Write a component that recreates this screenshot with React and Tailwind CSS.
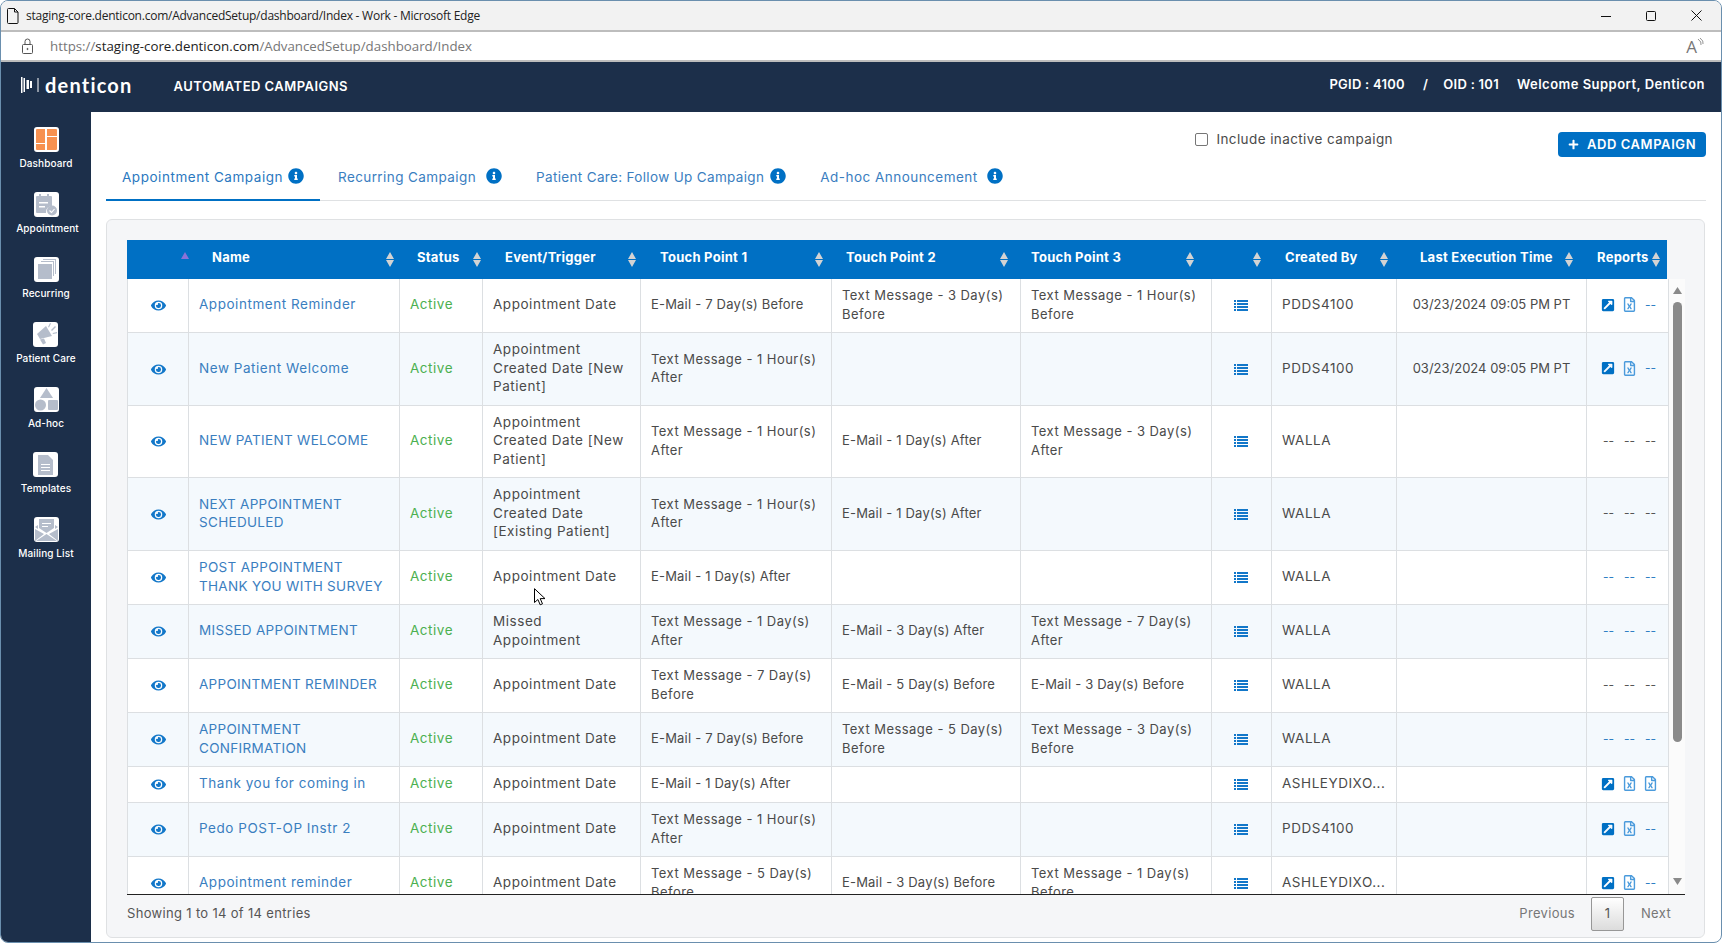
import React from "react";
import { FaEye, FaInfoCircle, FaPlus, FaExternalLinkSquareAlt, FaRegFileExcel } from "react-icons/fa";

const TM1HA = "Text Message - 1 Hour(s) After";
const rows = [
  { h: "h-[54px]", n: "Appointment Reminder", e: "Appointment Date", a: "E-Mail - 7 Day(s) Before", b: "Text Message - 3 Day(s) Before", c: "Text Message - 1 Hour(s) Before", by: "PDDS4100", t: "03/23/2024 09:05 PM PT", r: ["x", "f", "d"] },
  { h: "h-[73px]", n: "New Patient Welcome", e: "Appointment Created Date [New Patient]", a: TM1HA, b: "", c: "", by: "PDDS4100", t: "03/23/2024 09:05 PM PT", r: ["x", "f", "d"] },
  { h: "h-[72px]", n: "NEW PATIENT WELCOME", up: true, e: "Appointment Created Date [New Patient]", a: TM1HA, b: "E-Mail - 1 Day(s) After", c: "Text Message - 3 Day(s) After", by: "WALLA", t: "", r: ["g", "g", "g"] },
  { h: "h-[73px]", n: "NEXT APPOINTMENT SCHEDULED", up: true, e: "Appointment Created Date [Existing Patient]", a: TM1HA, b: "E-Mail - 1 Day(s) After", c: "", by: "WALLA", t: "", r: ["g", "g", "g"] },
  { h: "h-[54px]", n: "POST APPOINTMENT THANK YOU WITH SURVEY", up: true, e: "Appointment Date", a: "E-Mail - 1 Day(s) After", b: "", c: "", by: "WALLA", t: "", r: ["d", "d", "d"] },
  { h: "h-[54px]", n: "MISSED APPOINTMENT", up: true, e: "Missed Appointment", a: "Text Message - 1 Day(s) After", b: "E-Mail - 3 Day(s) After", c: "Text Message - 7 Day(s) After", by: "WALLA", t: "", r: ["d", "d", "d"] },
  { h: "h-[54px]", n: "APPOINTMENT REMINDER", up: true, e: "Appointment Date", a: "Text Message - 7 Day(s) Before", b: "E-Mail - 5 Day(s) Before", c: "E-Mail - 3 Day(s) Before", by: "WALLA", t: "", r: ["g", "g", "g"] },
  { h: "h-[54px]", n: "APPOINTMENT CONFIRMATION", up: true, e: "Appointment Date", a: "E-Mail - 7 Day(s) Before", b: "Text Message - 5 Day(s) Before", c: "Text Message - 3 Day(s) Before", by: "WALLA", t: "", r: ["d", "d", "d"] },
  { h: "h-[36px]", n: "Thank you for coming in", e: "Appointment Date", a: "E-Mail - 1 Day(s) After", b: "", c: "", by: "ASHLEYDIXO...", t: "", r: ["x", "f", "f"] },
  { h: "h-[54px]", n: "Pedo POST-OP Instr 2", e: "Appointment Date", a: TM1HA, b: "", c: "", by: "PDDS4100", t: "", r: ["x", "f", "d"] },
  { h: "h-[54px]", n: "Appointment reminder", e: "Appointment Date", a: "Text Message - 5 Day(s) Before", b: "E-Mail - 3 Day(s) Before", c: "Text Message - 1 Day(s) Before", by: "ASHLEYDIXO...", t: "", r: ["x", "f", "d"] },
];

const heads = [
  { w: "w-[61px]", pl: "pl-0", label: "", mr: "mr-[-1px]", first: true },
  { w: "w-[211px]", pl: "pl-[24px]", label: "Name", mr: "mr-[5px]" },
  { w: "w-[83px]", pl: "pl-[18px]", label: "Status", mr: "mr-[1px]" },
  { w: "w-[158px]", pl: "pl-[23px]", label: "Event/Trigger", mr: "mr-[4px]" },
  { w: "w-[191px]", pl: "pl-[20px]", label: "Touch Point 1", mr: "mr-[8px]" },
  { w: "w-[189px]", pl: "pl-[15px]", label: "Touch Point 2", mr: "mr-[12px]" },
  { w: "w-[191px]", pl: "pl-[11px]", label: "Touch Point 3", mr: "mr-[17px]" },
  { w: "w-[60px]", pl: "pl-0", label: "", mr: "mr-[10px]" },
  { w: "w-[125px]", pl: "pl-[14px]", label: "Created By", mr: "mr-[8px]" },
  { w: "w-[190px]", pl: "pl-[24px]", label: "Last Execution Time", mr: "mr-[13px]" },
  { w: "w-[81px]", pl: "pl-[11px]", label: "Reports", mr: "mr-[7px]" },
];

function Sort() {
  return (
    <svg width="8" height="15" viewBox="0 0 8 15" className="shrink-0" fill="#d3d3d3">
      <path d="M4 0 8 7H0zM0 8h8l-4 7z" />
    </svg>
  );
}

function ListIcon() {
  return (
    <svg width="14" height="11" viewBox="0 0 14 11" fill="#1277c9" className="inline-block">
      <path d="M0 0h2v2H0zM3 0h11v2H3zM0 3h2v2H0zM3 3h11v2H3zM0 6h2v2H0zM3 6h11v2H3zM0 9h2v2H0zM3 9h11v2H3z" />
    </svg>
  );
}

function Report({ k }) {
  if (k === "x") return <FaExternalLinkSquareAlt className="text-[14px] text-[#0070c4]" />;
  if (k === "f") return <FaRegFileExcel className="text-[15px] text-[#4b9bdc]" />;
  return <span className={k === "g" ? "ml-[2px] text-[12px] tracking-normal leading-none text-[#555]" : "ml-[2px] text-[12px] tracking-normal leading-none text-[#2f7fc4]"}>--</span>;
}

const Td = ({ children, cls = "" }) => (
  <td className={"align-middle px-[10px] pb-[2px] border-r border-b border-[#dcdfe2] " + cls}>{children}</td>
);

const tp = (s) => (s.startsWith("E-Mail") ? "text-[13px] tracking-[0.015em]" : "text-[13px] tracking-[0.035em]");

function Tile({ children }) {
  return <div className="w-[25px] h-[25px] bg-white rounded-[3px] flex items-center justify-center overflow-hidden">{children}</div>;
}

const nav = [
  ["Dashboard", <svg key="a" width="21" height="21" viewBox="0 0 21 21" fill="#f79150"><path d="M0 1q0-1 1-1h8v21H1q-1 0-1-1zM11 0h9q1 0 1 1v6H11zM11 8h10v12q0 1-1 1h-9z" /><path d="M0 14h9v1H0z" fill="#fff" /></svg>],
  ["Appointment", <svg key="b" width="23" height="22" viewBox="0 0 23 22" fill="#b5bdcb"><path d="M1 3q0-1 1-1h2V0h2v2h6V0h2v2h2q1 0 1 1v9a6 6 0 0 0-6 7H2q-1 0-1-1z" /><path d="M4 8h9v1.500H4zM4 12h6v1.500H4z" fill="#fff" /><circle cx="17" cy="16.500" r="5" /><path d="m14.500 16.500 2 2 3-3.500" fill="none" stroke="#fff" strokeWidth="1.100" /></svg>],
  ["Recurring", <svg key="c" width="21" height="21" viewBox="0 0 21 21" fill="#b5bdcb"><path d="M7 0h13v15h-1V1H7z" /><path d="M5 2h13v15h-1V3H5z" /><path d="M2 5h14v15H2z" /></svg>],
  ["Patient Care", <svg key="d" width="23" height="23" viewBox="0 0 23 23" fill="#b5bdcb"><path d="M12 3 18 13 6 16 3 11z" /><path d="M6 16.500 10 15.500 12 20 9 21.500z" /><path d="M14 4 16 0 17 .6 15 4.600zM17 7 21 3 22 4 18 8zM18.500 10 23 9 23 10.200 19 11z" /></svg>],
  ["Ad-hoc", <svg key="e" width="23" height="23" viewBox="0 0 23 23" fill="#b5bdcb"><path d="M11.500 0 18 10H5z" /><circle cx="5.500" cy="17" r="5.500" /><rect x="13" y="12" width="10" height="10" rx="1" /></svg>],
  ["Templates", <svg key="f" width="15" height="20" viewBox="0 0 15 20" fill="#b5bdcb"><path d="M0 0h10l5 5v15H0z" /><path d="M3 9h9v1H3zM3 12h9v1H3zM3 15h9v1H3z" fill="#fff" /></svg>],
  ["Mailing List", <svg key="g" width="23" height="22" viewBox="0 0 23 22" fill="#b5bdcb"><path d="M4 0h15v9l-7.500 5L4 9z" /><path d="M0 8l3-2v4zM23 8l-3-2v4zM0 10l9 5-9 7zM23 10l-9 5 9 7zM1 22l10.500-7L22 22z" /><path d="M7 4h9v1H7zM7 7h6v1H7z" fill="#fff" /></svg>],
];

export default function App() {
  return (
    <div className="relative w-[1722px] h-[943px] box-border flex flex-col overflow-hidden rounded-lg border border-[#6a8fae] bg-white font-[Inter,sans-serif] text-[13.5px] text-[#4a4a4a] tracking-[0.04em]">
      {/* Title bar */}
      <div className="h-[29px] shrink-0 flex items-center bg-[#f2f2f2] border-b-2 border-[#bdbdbd] box-content font-['Open_Sans',sans-serif] text-[12px] text-[#222] tracking-normal">
        <svg width="12" height="16" viewBox="0 0 12 16" fill="none" stroke="#111" strokeWidth="1" className="ml-[6px]">
          <path d="M1.500.5H7.500L11 4v10.500q0 1-1 1H1.500q-1 0-1-1V1.500q0-1 1-1zM7.500.5V4H11" />
        </svg>
        <span className="ml-[7px] mt-[1px] tracking-[-0.02em]">staging-core.denticon.com/AdvancedSetup/dashboard/Index - Work - Microsoft Edge</span>
        <div className="ml-auto mr-[19px] flex items-center gap-[35px]">
          <svg width="10" height="10" viewBox="0 0 10 10" stroke="#111" fill="none"><path d="M0 5.500h10" /></svg>
          <svg width="10" height="10" viewBox="0 0 10 10" stroke="#111" fill="none"><rect x=".5" y=".5" width="9" height="9" rx="1" /></svg>
          <svg width="11" height="11" viewBox="0 0 11 11" stroke="#111" fill="none"><path d="M.5.500l10 10M10.500.500l-10 10" /></svg>
        </div>
      </div>
      {/* URL bar */}
      <div className="h-[28px] shrink-0 flex items-center bg-white border-b-2 border-[#bdbdbd] box-content font-['Open_Sans',sans-serif] text-[13.3px] tracking-normal text-[#777]">
        <svg width="13" height="16" viewBox="0 0 13 16" fill="none" stroke="#555" className="ml-[20px]">
          <rect x="1.500" y="6.500" width="10" height="9" rx="1" /><path d="M4 6.500V3.500a2.500 2.500 0 0 1 5 0v3" /><circle cx="6.500" cy="11" r=".6" fill="#555" />
        </svg>
        <span className="ml-[16px] mt-[1px]">https://<span className="text-[#222]">staging-core.denticon.com</span>/AdvancedSetup/dashboard/Index</span>
        <div className="ml-auto mr-[17px] flex items-start text-[#777]">
          <span className="text-[17px] leading-none font-['Open_Sans',sans-serif]">A</span>
          <svg width="7" height="9" viewBox="0 0 7 9" fill="none" stroke="#777" strokeWidth=".8"><path d="M1 1q4 3 3 6M3 0q4 3 3 6" /></svg>
        </div>
      </div>
      {/* Header */}
      <header className="h-[50px] shrink-0 flex items-center bg-[#1c2f4a] text-white font-semibold">
        <svg width="18" height="16" viewBox="0 0 18 16" fill="#fff" className="ml-[20px] mt-[-4px]">
          <path d="M0 0h1.500v16H0zM2.500 1h1.500v14H2.500zM5.500 3h2.500v9H5.500zM9 4h2v7H9zM16.500 1h1v14h-1z" />
        </svg>
        <span className="ml-[6px] mt-[-4px] text-[20px] font-bold tracking-[0.06em] font-[Lato,sans-serif]">denticon</span>
        <span className="ml-[41px] text-[13px] tracking-[0.036em]">AUTOMATED CAMPAIGNS</span>
        <div className="ml-auto mr-[16px] flex items-center text-[13px] mt-[-4px] tracking-[0.037em]">
          <span className="tracking-[0.02em]">PGID : 4100</span>
          <span className="ml-[18px]">/</span>
          <span className="ml-[15px] tracking-[0.02em]">OID : 101</span>
          <span className="ml-[18px]">Welcome Support, Denticon</span>
        </div>
      </header>
      <div className="flex-1 flex min-h-0">
        {/* Sidebar */}
        <aside className="w-[90px] shrink-0 bg-[#1c2f4a] flex flex-col items-center pt-[15px] text-white text-[10px] font-medium tracking-[0.01em]">
          {nav.map(([label, icon]) => (
            <div key={label} className="h-[65px] flex flex-col items-center">
              <Tile>{icon}</Tile>
              <span className={label === "Appointment" ? "mt-[5px] ml-[3px] leading-[12px]" : "mt-[5px] leading-[12px]"}>{label}</span>
            </div>
          ))}
        </aside>
        {/* Main */}
        <main className="flex-1 min-w-0 pl-[15px] pr-[15px] flex flex-col">
          <div className="h-[48px] shrink-0 flex items-start justify-end">
            <label className="flex items-center mt-[19px] mr-[165px]">
              <span className="w-[13px] h-[13px] border border-[#767676] rounded-[2px] bg-white" />
              <span className="ml-[8px] tracking-[0.03em] leading-[16px]">Include inactive campaign</span>
            </label>
            <button className="mt-[20px] w-[148px] h-[25px] rounded-[4px] bg-[#0070c4] text-white text-[13px] font-semibold flex items-center justify-center gap-[8px] tracking-[0.045em]">
              <FaPlus className="text-[11px]" />
              ADD CAMPAIGN
            </button>
          </div>
          <div className="h-[41px] shrink-0 flex border-b border-[#dfe1e3] text-[#3a7ebf]">
            <div className="w-[214px] h-[41px] flex items-start pt-[7px] pl-[16px] gap-[5px] border-b-2 border-[#0070c4] text-[#2a78c0]">
              <span>Appointment Campaign</span><FaInfoCircle className="text-[16px] text-[#0070c4] shrink-0 mt-[1px]" />
            </div>
            <div className="flex items-start pt-[7px] pl-[18px] gap-[10px]">
              <span className="tracking-[0.03em]">Recurring Campaign</span><FaInfoCircle className="text-[16px] text-[#0070c4] shrink-0 mt-[1px]" />
            </div>
            <div className="flex items-start pt-[7px] pl-[34px] gap-[6px]">
              <span className="tracking-[0.025em]">Patient Care: Follow Up Campaign</span><FaInfoCircle className="text-[16px] text-[#0070c4] shrink-0 mt-[1px]" />
            </div>
            <div className="flex items-start pt-[7px] pl-[34px] gap-[9px]">
              <span className="tracking-[0.035em]">Ad-hoc Announcement</span><FaInfoCircle className="text-[16px] text-[#0070c4] shrink-0 mt-[1px]" />
            </div>
          </div>
          {/* Card */}
          <div className="mt-[18px] h-[719px] shrink-0 w-[1599px] rounded-md border border-[#dfe1e3] bg-[#f5f6f8] pl-[20px] pt-[20px] flex flex-col">
            <div className="w-[1540px] h-[39px] shrink-0 flex bg-[#0070c4] text-white font-bold text-[13px] tracking-[0.02em]">
              {heads.map((h, i) => (
                <div key={i} className={"h-full flex items-center shrink-0 " + h.w + " " + h.pl}>
                  {h.first ? null : <span className="mt-[-4px] whitespace-nowrap">{h.label}</span>}
                  {h.first ? (
                    <svg width="8" height="7" viewBox="0 0 8 7" fill="#8a72d8" className="ml-auto mr-[-1px] mt-[-9px]"><path d="M4 0 8 7H0z" /></svg>
                  ) : (
                    <span className={"ml-auto " + h.mr}><Sort /></span>
                  )}
                </div>
              ))}
            </div>
            <div className="w-[1558px] h-[615px] shrink-0 flex border-b border-[#222] box-content">
              <div className="w-[1542px] h-[615px] overflow-hidden shrink-0">
                <table className="table-fixed w-[1542px] border-separate border-spacing-0">
                  <colgroup>
                    <col className="w-[62px]" /><col className="w-[211px]" /><col className="w-[83px]" /><col className="w-[158px]" /><col className="w-[191px]" /><col className="w-[189px]" /><col className="w-[191px]" /><col className="w-[60px]" /><col className="w-[125px]" /><col className="w-[190px]" /><col className="w-[82px]" />
                  </colgroup>
                  <tbody className="leading-[18.5px]">
                    {rows.map((r, i) => (
                      <tr key={i} className={r.h + " " + (i % 2 ? "bg-[#f4f9fd]" : "bg-white")}>
                        <td className="align-middle text-center pb-[2px] border-l border-r border-b border-[#dcdfe2]"><FaEye className="inline-block text-[15px] text-[#1277c9]" /></td>
                        <Td cls={r.up ? "text-[#3a7ebf] tracking-[0.023em]" : "text-[#3a7ebf]"}>{r.n}</Td>
                        <Td cls="text-[#4cb050]">Active</Td>
                        <Td>{r.e}</Td>
                        <Td cls={tp(r.a)}>{r.a}</Td>
                        <Td cls={tp(r.b)}>{r.b}</Td>
                        <Td cls={tp(r.c)}>{r.c}</Td>
                        <td className="align-middle text-center pr-[2px] pb-[2px] border-r border-b border-[#dcdfe2]"><ListIcon /></td>
                        <Td>{r.by}</Td>
                        <Td cls="text-center whitespace-nowrap text-[13px] tracking-normal">{r.t}</Td>
                        <td className="align-middle border-r border-b border-[#dcdfe2] pl-[14px] pb-[2px]">
                          <div className="flex items-center">
                            {r.r.map((k, j) => (
                              <div key={j} className="w-[21px] h-[16px] flex items-center"><Report k={k} /></div>
                            ))}
                          </div>
                        </td>
                      </tr>
                    ))}
                  </tbody>
                </table>
              </div>
              <div className="w-[16px] shrink-0 bg-[#fbfbfb] flex flex-col items-center">
                <svg width="9" height="7" viewBox="0 0 9 7" fill="#8a8a8a" className="mt-[8px]"><path d="M4.500 0 9 7H0z" /></svg>
                <div className="mt-[8px] w-[9px] h-[440px] rounded-full bg-[#8a8a8a]" />
                <svg width="9" height="7" viewBox="0 0 9 7" fill="#8a8a8a" className="mt-auto mb-[9px]"><path d="M0 0h9L4.500 7z" /></svg>
              </div>
            </div>
            <div className="w-[1558px] flex-1 flex items-center pb-[4px] text-[13px] tracking-[0.025em] text-[#555]">
              <span>Showing 1 to 14 of 14 entries</span>
              <span className="ml-auto text-[#777]">Previous</span>
              <span className="ml-[16px] w-[33px] h-[34px] flex items-center justify-center rounded-[2px] border border-[#979797] bg-gradient-to-b from-white to-[#dcdcdc] text-[#555]">1</span>
              <span className="ml-[17px] mr-[14px] text-[#777]">Next</span>
            </div>
          </div>
        </main>
      </div>
      <svg width="12" height="18" viewBox="0 0 12 18" fill="#fff" stroke="#000" strokeWidth="1" className="absolute left-[533px] top-[587px]">
        <path d="M.5.700V14.500l3.400-3 2.300 5.300 2.300-1-2.300-5.200H11z" />
      </svg>
    </div>
  );
}
